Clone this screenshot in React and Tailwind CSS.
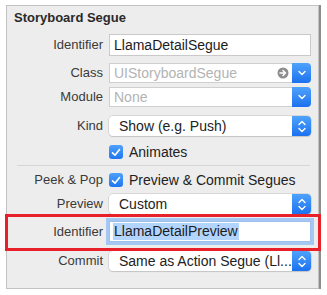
import React from 'react';

const font = { fontFamily: '"Liberation Sans", Arial, sans-serif' };

const ChevronDown = () => (
    <svg width="8" height="6" viewBox="0 0 8 6" fill="none">
        <path d="M1 1.5 L4 4.5 L7 1.5" stroke="white" strokeWidth="1.4" strokeLinecap="round" strokeLinejoin="round" />
    </svg>
);

const Stepper = () => (
    <svg width="8" height="13" viewBox="0 0 8 13" fill="none">
        <path d="M1 4.5 L4 1.5 L7 4.5" stroke="white" strokeWidth="1.4" strokeLinecap="round" strokeLinejoin="round" />
        <path d="M1 8.5 L4 11.5 L7 8.5" stroke="white" strokeWidth="1.4" strokeLinecap="round" strokeLinejoin="round" />
    </svg>
);

const CircleArrow = () => (
    <svg width="12" height="12" viewBox="0 0 12 12">
        <circle cx="6" cy="6" r="5.5" fill="#8d8d8d" />
        <path d="M3 6 H8.5 M6 3.5 L8.5 6 L6 8.5" stroke="white" strokeWidth="1.5" fill="none" strokeLinecap="round" strokeLinejoin="round" />
    </svg>
);

const Check = () => (
    <div className="w-[14px] h-[14px] rounded-[3px] bg-gradient-to-b from-[#4ea1fb] to-[#1f75f1] flex items-center justify-center">
        <svg width="10" height="9" viewBox="0 0 10 9" fill="none">
            <path d="M1.5 4.8 L4 7.2 L8.5 1.5" stroke="white" strokeWidth="1.6" strokeLinecap="round" strokeLinejoin="round" />
        </svg>
    </div>
);

const Label = ({ children }) => (
    <div className="w-[96px] shrink-0 text-right text-[13px] text-[#3a3a3a]">{children}</div>
);

const Row = ({ label, className = '', children }) => (
    <div className={`flex items-center ${className}`}>
        <Label>{label}</Label>
        <div className="ml-[6px] w-[202px] shrink-0">{children}</div>
    </div>
);

const Combo = ({ placeholder, icon }) => (
    <div className="flex h-[20px]">
        <div className="flex-1 flex items-center bg-white border border-[#cfcfcf] border-r-0 pl-[4px] pr-[3px] text-[14px] text-[#b3b3b3]">
            <span className="flex-1">{placeholder}</span>
            {icon && <CircleArrow />}
        </div>
        <div className="w-[19px] rounded-r-[4px] bg-gradient-to-b from-[#4fa2fb] to-[#1b71f0] flex items-center justify-center">
            <ChevronDown />
        </div>
    </div>
);

const Popup = ({ value }) => (
    <div className="flex h-[20px] rounded-[4px] bg-white shadow-[0_0_0_0.5px_#c2c2c2,0_1px_1px_rgba(0,0,0,0.15)]">
        <div className="flex-1 flex items-center pl-[10px] text-[14px] text-[#222] whitespace-nowrap">{value}</div>
        <div className="w-[19px] rounded-r-[4px] bg-gradient-to-b from-[#4fa2fb] to-[#1b71f0] flex items-center justify-center">
            <Stepper />
        </div>
    </div>
);

export default function App() {
    return (
        <div className="w-[327px] h-[295px] bg-white pt-[5px] pl-[6px] relative" style={font}>
            <div className="w-[313px] h-[284px] bg-[#ededed] border border-[#c2c2c2] shadow-[2px_0_0_#8c8c8c] flex flex-col">
                <div className="mt-[4px] pl-[7px] h-[16px] leading-[16px] text-[13px] font-bold text-[#2a2a2a]">Storyboard Segue</div>

                <Row label="Identifier" className="mt-[8px]">
                    <div className="h-[22px] bg-white border border-[#c9c9c9] flex items-center pl-[4px] text-[14px] text-[#1c1c1c]">LlamaDetailSegue</div>
                </Row>

                <Row label="Class" className="mt-[7px]">
                    <Combo placeholder="UIStoryboardSegue" icon />
                </Row>

                <Row label="Module" className="mt-[4px]">
                    <Combo placeholder="None" />
                </Row>

                <Row label="Kind" className="mt-[9px]">
                    <Popup value="Show (e.g. Push)" />
                </Row>

                <Row label="" className="mt-[8px] h-[16px]">
                    <div className="flex items-center gap-[6px] text-[14px] text-[#222]">
                        <Check />
                        <span>Animates</span>
                    </div>
                </Row>

                <div className="mt-[5px] ml-[10px] w-[293px] h-px bg-[#d6d6d6]" />

                <Row label="Peek & Pop" className="mt-[6px] h-[16px]">
                    <div className="flex items-center gap-[6px] text-[14px] text-[#222] whitespace-nowrap">
                        <Check />
                        <span>Preview &amp; Commit Segues</span>
                    </div>
                </Row>

                <Row label="Preview" className="mt-[6px]">
                    <Popup value="Custom" />
                </Row>

                <Row label="Identifier" className="mt-[7px]">
                    <div className="h-[21px] bg-white border border-[#9fbfe8] shadow-[0_0_0_3px_#a4c7f4] flex items-center pl-[3px] text-[14px] text-[#1c1c1c]">
                        <span className="bg-[#b3d4fc] leading-[17px] px-[1px]">LlamaDetailPreview</span>
                    </div>
                </Row>

                <Row label="Commit" className="mt-[9px]">
                    <Popup value="Same as Action Segue (Ll..." />
                </Row>
            </div>

            <div className="absolute left-[5px] top-[214px] w-[316px] h-[37px] border-[3px] border-[#e8202a] pointer-events-none" />
        </div>
    );
}
